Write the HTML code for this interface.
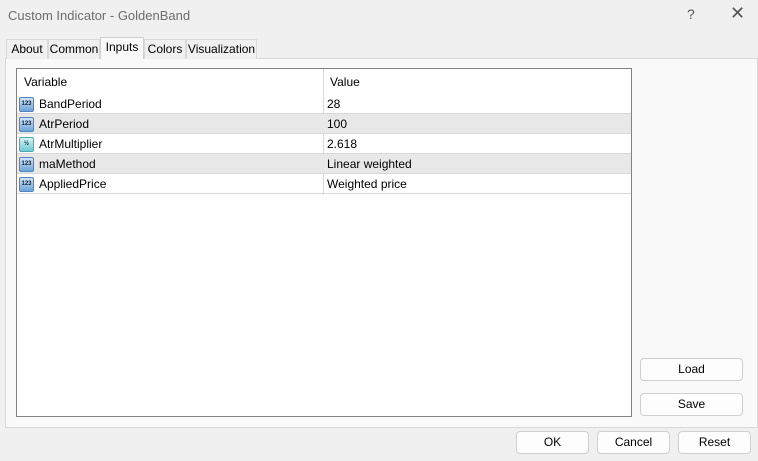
<!DOCTYPE html>
<html><head><style>
*{margin:0;padding:0;box-sizing:border-box}
body{width:758px;height:461px;background:#f0f0f0;font-family:"Liberation Sans",sans-serif;font-size:12px;color:#000;position:relative;overflow:hidden}
.a{position:absolute}
.title{left:8px;top:8px;font-size:13px;color:#6d6d6d}
.tab{top:39px;height:20px;border:1px solid #d9d9d9;border-bottom:none;background:#f0f0f0;text-align:center;line-height:19px;font-size:12px}
.panel{left:5px;top:58px;width:753px;height:370px;border:1px solid #d9d9d9;background:#f9f9f9}
.list{left:16px;top:68px;width:616px;height:349px;border:1px solid #828282;background:#fff}
.row{position:absolute;left:0;width:614px;height:20px;border-bottom:1px solid #d8d8d8;line-height:21px}
.row span{position:absolute}
.c1{left:22px}.c2{left:310px}
.div{position:absolute;left:306px;top:0;width:1px;height:124px;background:#d8d8d8}
.ic{position:absolute;left:2px;top:3px;width:15px;height:15px;border-radius:2px;background:linear-gradient(#cfe3f7,#6ea3d8);border:1px solid #4f86c0;font-size:6px;line-height:13px;text-align:center;color:#123;font-weight:bold}
.btn{height:23px;border:1px solid #d0d0d0;border-radius:4px;background:#fdfdfd;text-align:center;line-height:21px}
</style></head><body>
<div class="a title">Custom Indicator - GoldenBand</div>
<div class="a" style="left:687px;top:6px;font-size:14px;color:#555">?</div>
<div class="a" style="left:730px;top:3px;font-size:18px;color:#555">✕</div>
<div class="a panel"></div>
<div class="a tab" style="left:6px;width:42px">About</div>
<div class="a tab" style="left:48px;width:52px">Common</div>
<div class="a tab" style="left:100px;width:44px;top:37px;height:22px;background:#f9f9f9;border-color:#d0d0d0">Inputs</div>
<div class="a tab" style="left:144px;width:42px">Colors</div>
<div class="a tab" style="left:186px;width:71px">Visualization</div>
<div class="a list">
<div class="div" style="height:126px"></div>
<div class="row" style="top:0;height:25px;line-height:27px;border-bottom:none"><span style="left:7px">Variable</span><span class="c2" style="left:313px">Value</span></div>
<div class="row" style="top:25px"><div class="ic">123</div><span class="c1">BandPeriod</span><span class="c2">28</span></div>
<div class="row" style="top:45px;background:#e8e8e8"><div class="ic">123</div><span class="c1">AtrPeriod</span><span class="c2">100</span></div>
<div class="row" style="top:65px"><div class="ic" style="background:linear-gradient(#d5f3f5,#6fc9d3);border-color:#4aa9b3">½</div><span class="c1">AtrMultiplier</span><span class="c2">2.618</span></div>
<div class="row" style="top:85px;background:#e8e8e8"><div class="ic">123</div><span class="c1">maMethod</span><span class="c2">Linear weighted</span></div>
<div class="row" style="top:105px"><div class="ic">123</div><span class="c1">AppliedPrice</span><span class="c2">Weighted price</span></div>
</div>
<div class="a btn" style="left:640px;top:358px;width:103px">Load</div>
<div class="a btn" style="left:640px;top:393px;width:103px">Save</div>
<div class="a btn" style="left:516px;top:431px;width:73px">OK</div>
<div class="a btn" style="left:597px;top:431px;width:73px">Cancel</div>
<div class="a btn" style="left:678px;top:431px;width:73px">Reset</div>
</body></html>
